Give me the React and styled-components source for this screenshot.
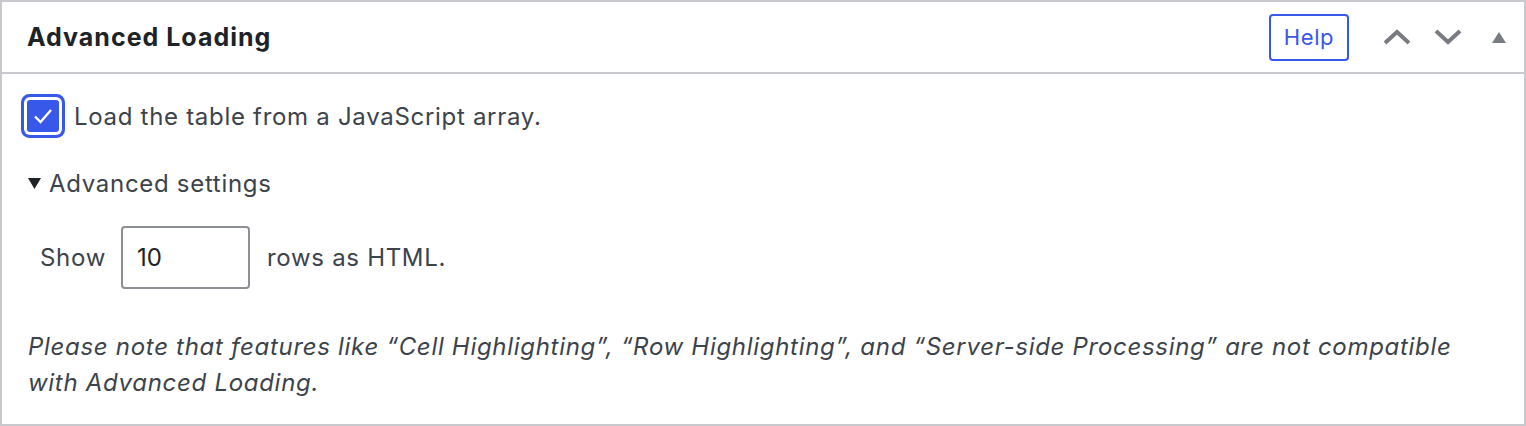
import styled, { createGlobalStyle } from "styled-components";

const Global = createGlobalStyle`
  html, body {
    margin: 0;
    padding: 0;
    background: #ffffff;
  }
  body {
    font-family: Inter, "Noto Sans", "Liberation Sans", sans-serif;
  }
`;

const Box = styled.section`
  box-sizing: border-box;
  width: 1526px;
  height: 426px;
  border: 2px solid #c8c9cc;
  background: #fff;
  color: #3c434a;
`;

const Header = styled.header`
  display: flex;
  align-items: center;
  height: 70px;
  border-bottom: 2px solid #c8c9cc;
  padding-left: 25px;
`;

const Title = styled.h2`
  flex: 1;
  margin: 0;
  font-size: 25px;
  font-weight: 700;
  color: #1d2327;
  letter-spacing: 1px;
`;

const HelpButton = styled.button`
  box-sizing: border-box;
  width: 80px;
  height: 47px;
  margin-right: 22px;
  border: 2px solid #3858e9;
  border-radius: 4px;
  background: #fff;
  color: #3858e9;
  font-family: inherit;
  font-size: 22px;
  letter-spacing: 0.6px;
  padding: 0;
`;

const Handle = styled.button`
  width: 51px;
  height: 50px;
  display: flex;
  align-items: center;
  justify-content: center;
  border: 0;
  background: none;
  padding: 0;
  color: #787c82;
`;

const Body = styled.div`
  padding: 21px 26px 0 26px;
  font-size: 24px;
  letter-spacing: 0.7px;
`;

const CheckRow = styled.label`
  display: flex;
  align-items: center;
  gap: 15px;
  height: 42px;
`;

const Check = styled.span`
  box-sizing: border-box;
  flex: none;
  width: 32px;
  height: 32px;
  margin-left: -1px;
  border-radius: 3px;
  background: #3858e9;
  display: flex;
  align-items: center;
  justify-content: center;
  box-shadow: 0 0 0 3px #fff, 0 0 0 6px #3858e9;
`;

const Summary = styled.div`
  display: flex;
  align-items: center;
  gap: 8px;
  margin-top: 31px;
  height: 30px;
`;

const ShowRow = styled.div`
  display: flex;
  align-items: center;
  margin-top: 28px;
  padding-left: 12px;
`;

const NumberInput = styled.input`
  box-sizing: border-box;
  width: 129px;
  height: 63px;
  margin: 0 17px 0 15px;
  border: 2px solid #8c8f94;
  border-radius: 4px;
  padding: 0 14px;
  font-family: inherit;
  font-size: 24px;
  color: #1d2327;
  outline: none;
`;

const Note = styled.p`
  margin: 40px 0 0 0;
  font-size: 24px;
  letter-spacing: 0.7px;
  font-style: italic;
  line-height: 36px;
  max-width: 1450px;
`;

export default function App() {
  return (
    <>
      <Global />
      <Box>
        <Header>
          <Title>Advanced Loading</Title>
          <HelpButton>Help</HelpButton>
          <Handle aria-label="Move up">
            <svg width="28" height="16" viewBox="0 0 28 16">
              <path d="M2 14 L14 3 L26 14" fill="none" stroke="currentColor" strokeWidth="4" />
            </svg>
          </Handle>
          <Handle aria-label="Move down">
            <svg width="28" height="16" viewBox="0 0 28 16">
              <path d="M2 2 L14 13 L26 2" fill="none" stroke="currentColor" strokeWidth="4" />
            </svg>
          </Handle>
          <Handle aria-label="Toggle panel">
            <svg width="14" height="11" viewBox="0 0 14 11">
              <path d="M7 0 L14 11 L0 11 Z" fill="currentColor" />
            </svg>
          </Handle>
        </Header>
        <Body>
          <CheckRow>
            <Check>
              <svg width="20" height="16" viewBox="0 0 20 16">
                <path d="M2 8.5 L7.5 14 L18 2" fill="none" stroke="#fff" strokeWidth="2.4" />
              </svg>
            </Check>
            Load the table from a JavaScript array.
          </CheckRow>
          <Summary>
            <svg width="13" height="11" viewBox="0 0 13 11">
              <path d="M0 0 L13 0 L6.5 11 Z" fill="#1d2327" />
            </svg>
            Advanced settings
          </Summary>
          <ShowRow>
            Show
            <NumberInput type="text" defaultValue="10" />
            rows as HTML.
          </ShowRow>
          <Note>
            Please note that features like “Cell Highlighting”, “Row Highlighting”, and “Server-side Processing” are not compatible with Advanced Loading.
          </Note>
        </Body>
      </Box>
    </>
  );
}
